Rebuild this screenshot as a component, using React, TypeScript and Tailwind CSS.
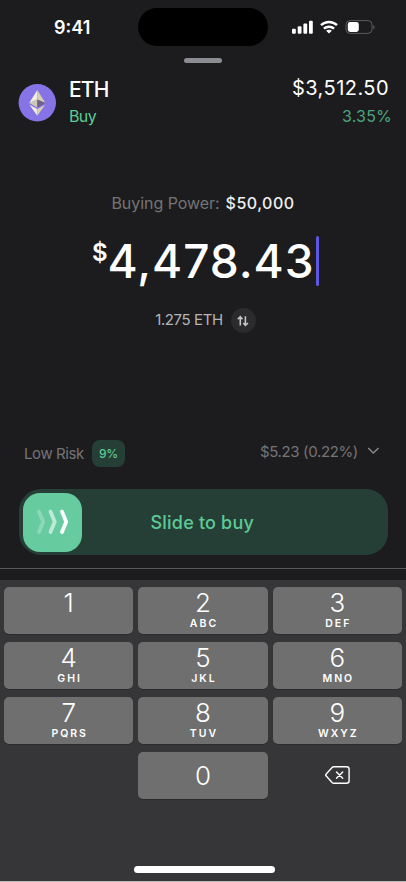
import React from "react";

const keys = [
    { digit: "1", letters: "" },
    { digit: "2", letters: "ABC" },
    { digit: "3", letters: "DEF" },
    { digit: "4", letters: "GHI" },
    { digit: "5", letters: "JKL" },
    { digit: "6", letters: "MNO" },
    { digit: "7", letters: "PQRS" },
    { digit: "8", letters: "TUV" },
    { digit: "9", letters: "WXYZ" },
];

const StatusBar = () => {
    return (
        <div className="flex h-[54px] items-start justify-between pt-2">
            <div className="w-[138px] pl-[54px] pt-[10px] text-[18px] leading-5 font-semibold">
                9:41
            </div>
            <div className="h-[38px] w-[130px] rounded-full bg-black" />
            <div className="flex w-[138px] items-center pl-[24px] pt-[12px]">
                {/* Signal */}
                <svg width="21" height="14" viewBox="0 0 21 14" fill="white">
                    <rect x="0" y="8.7" width="3.8" height="5" rx="1" />
                    <rect x="5.7" y="6.3" width="3.8" height="7.4" rx="1" />
                    <rect x="11.4" y="3.6" width="3.8" height="10.1" rx="1" />
                    <rect x="17" y="0.8" width="3.8" height="12.9" rx="1" />
                </svg>
                {/* Wifi */}
                <svg className="ml-[7px]" width="18" height="14" viewBox="0 0 18 14" fill="none" stroke="white" strokeWidth="2.4">
                    <path d="M1 5.2C5.5 0.9 12.5 0.9 17 5.2" />
                    <path d="M3.9 8.7c2.9-2.6 7.3-2.6 10.2 0" />
                    <path d="M9 13.6 6.1 10.8c1.6-1.4 4.2-1.4 5.8 0Z" fill="white" stroke="none" />
                </svg>
                {/* Battery */}
                <svg className="ml-[7px]" width="30" height="14" viewBox="0 0 30 14" fill="none">
                    <rect x="1" y="0.6" width="26" height="12.8" rx="4" stroke="#5b5b5d" />
                    <path d="M28.4 5v4.4c1.4-.7 1.4-3.7 0-4.4Z" fill="#6b6b6d" />
                    <rect x="2.8" y="2" width="11" height="10" rx="2.4" fill="white" />
                </svg>
            </div>
        </div>
    );
};

const EthLogo = () => {
    return (
        <svg width="38" height="38" viewBox="0 0 38 38">
            <circle cx="19.3" cy="18.7" r="18.7" fill="#8673e6" />
            <path d="M19.3 6 11.2 19 19.3 15.6Z" fill="#f1ecda" />
            <path d="M19.3 6 27.4 19 19.3 15.6Z" fill="#d6cfb9" />
            <path d="M11.2 19 19.3 15.6v7.8Z" fill="#cfc8b6" />
            <path d="M27.4 19 19.3 15.6v7.8Z" fill="#6e6288" />
            <path d="M11.4 20.8 19.3 25.1v6.6Z" fill="#f1ecda" />
            <path d="M27.2 20.8 19.3 25.1v6.6Z" fill="#d6cfb9" />
        </svg>
    );
};

const Header = () => {
    return (
        <div className="flex items-start justify-between pl-[18px] pr-[14px]">
            <div className="flex">
                <div className="pt-[6.5px]">
                    <EthLogo />
                </div>
                <div className="pl-[13px]">
                    <div className="text-[21px] leading-[26px] font-medium tracking-[-0.8px]">ETH</div>
                    <div className="text-[16px] leading-[26px] tracking-[-0.6px] text-[#5bcb96]">Buy</div>
                </div>
            </div>
            <div className="text-right">
                <div className="pr-[3px] text-[20px] leading-[23px] tracking-[0.45px]">$3,512.50</div>
                <div className="text-[16px] leading-[32px] tracking-[0.2px] text-[#4aa67e]">3.35%</div>
            </div>
        </div>
    );
};

const Amount = () => {
    return (
        <div className="flex flex-col items-center pt-[61px]">
            <div className="flex gap-[6px] text-[16px] leading-5">
                <span className="tracking-[-0.05px] text-[#747476]">Buying Power:</span>
                <span className="font-medium tracking-[0.5px] text-[#f0f0f0]">$50,000</span>
            </div>
            <div className="mt-[23px] flex h-[50px] items-start pl-[5px]">
                <span className="pt-[3px] text-[24px] leading-[28px] font-semibold">$</span>
                <span className="text-[46px] leading-[50px] font-medium tracking-[0.95px]">4,478.43</span>
                <span className="ml-[1px] h-[50px] w-[3.5px] rounded-full bg-[#5d57e6]" />
            </div>
            <div className="mt-[22px] flex items-center gap-[8px] pl-[5px]">
                <span className="text-[15px] tracking-[-0.4px] text-[#b5b5b7]">1.275 ETH</span>
                <span className="flex size-[25px] items-center justify-center rounded-full bg-[#2b2b2d]">
                    <svg width="12" height="12" viewBox="0 0 12 12" fill="none" stroke="#c4c4c6" strokeWidth="1.6">
                        <path d="M3.3 10.5V1.8M.8 4.2l2.5-2.5 2.2 2.5M8.4 1.3v9M6.3 8l2.1 2.4L11 8" />
                    </svg>
                </span>
            </div>
        </div>
    );
};

const Risk = () => {
    return (
        <div className="flex h-[27px] items-center justify-between pl-6 pr-[26px] text-[15px] text-[#747478]">
            <div className="flex items-center">
                <span className="w-[68px] pt-px tracking-[-0.4px]">Low Risk</span>
                <span className="flex h-[27px] w-[33px] items-center justify-center rounded-lg bg-[#263f36] text-[12px] font-medium tracking-[-0.3px] text-[#5bcb96]">
                    9%
                </span>
            </div>
            <div className="flex items-center gap-[9px] pb-[2px]">
                <span className="tracking-[-0.35px]">$5.23 (0.22%)</span>
                <svg className="mb-[4px]" width="13" height="8" viewBox="0 0 13 8" fill="none" stroke="#88888c" strokeWidth="1.5">
                    <path d="m1.2 1 5.1 5 5.2-5" />
                </svg>
            </div>
        </div>
    );
};

const Slider = () => {
    return (
        <div className="mx-[18.5px] mt-[22px] flex h-[66px] items-center rounded-[22px] bg-[#263f36] pl-1">
            <div className="flex size-[59px] items-center justify-center rounded-[17px] bg-[#66cb9f]">
                <svg width="33" height="26" viewBox="0 0 33 26" fill="none" stroke="white" strokeWidth="3.8" strokeLinecap="round" strokeLinejoin="round">
                    <path d="m3 2.6 4.2 10.2L3 23" opacity=".25" />
                    <path d="m14.5 2.6 4.2 10.2L14.5 23" opacity=".58" />
                    <path d="m26 2.6 4.2 10.2L26 23" />
                </svg>
            </div>
            <span className="pl-[69px] text-[18px] font-medium tracking-[0.2px] text-[#5bcb96]">Slide to buy</span>
        </div>
    );
};

const Keypad = () => {
    return (
        <div className="flex h-[302px] flex-col border-b border-[#bdbdbd] bg-[#363638] px-1 pt-[6.5px]">
            <div className="grid grid-cols-3 gap-x-[5px] gap-y-[7.5px]">
                {keys.map((key) => (
                    <button
                        key={key.digit}
                        className="flex h-[47.5px] flex-col items-center rounded-[5px] bg-[#6f6f6f] shadow-[0_1px_0_#2b2b2d]"
                    >
                        <span className="text-[26px] leading-8 font-light">{key.digit}</span>
                        {key.letters && (
                            <span className="pl-[2px] text-[10.5px] leading-[9px] font-semibold tracking-[2px]">{key.letters}</span>
                        )}
                    </button>
                ))}
                <div />
                <button className="flex h-[47.5px] items-center justify-center rounded-[5px] bg-[#6f6f6f] text-[26px] font-light shadow-[0_1px_0_#2b2b2d]">
                    0
                </button>
                <button className="flex h-[47.5px] items-center justify-center">
                    <svg width="25" height="18" viewBox="0 0 25 18" fill="none" stroke="white" strokeWidth="1.4" strokeLinecap="round" strokeLinejoin="round">
                        <path d="M8.8.8h12.8a2.5 2.5 0 0 1 2.5 2.5v11.4a2.5 2.5 0 0 1-2.5 2.5H8.8c-.7 0-1.2-.3-1.7-.8L1 9.8a1.1 1.1 0 0 1 0-1.6L7.1 1.6C7.6 1.1 8.1.8 8.8.8Z" />
                        <path d="m11.5 6 6.2 6.2M17.7 6l-6.2 6.2" />
                    </svg>
                </button>
            </div>
            <div className="mt-auto mb-2 ml-[129.5px] h-[7px] w-[141px] rounded-full bg-white" />
        </div>
    );
};

const App = () => {
    return (
        <div className="flex h-[882px] w-[406px] flex-col overflow-hidden bg-[#1c1c1e] font-['Inter',sans-serif] text-white">
            <StatusBar />
            {/* Sheet handle */}
            <div className="mx-auto mt-1 mb-[14px] h-[5px] w-[38px] rounded-full bg-[#8c8c93]" />
            <Header />
            <Amount />
            <div className="mt-auto">
                <Risk />
                <Slider />
                <div className="mt-[13px] h-3 border-t border-[#58585a]" />
            </div>
            <Keypad />
        </div>
    );
};

export default App;
